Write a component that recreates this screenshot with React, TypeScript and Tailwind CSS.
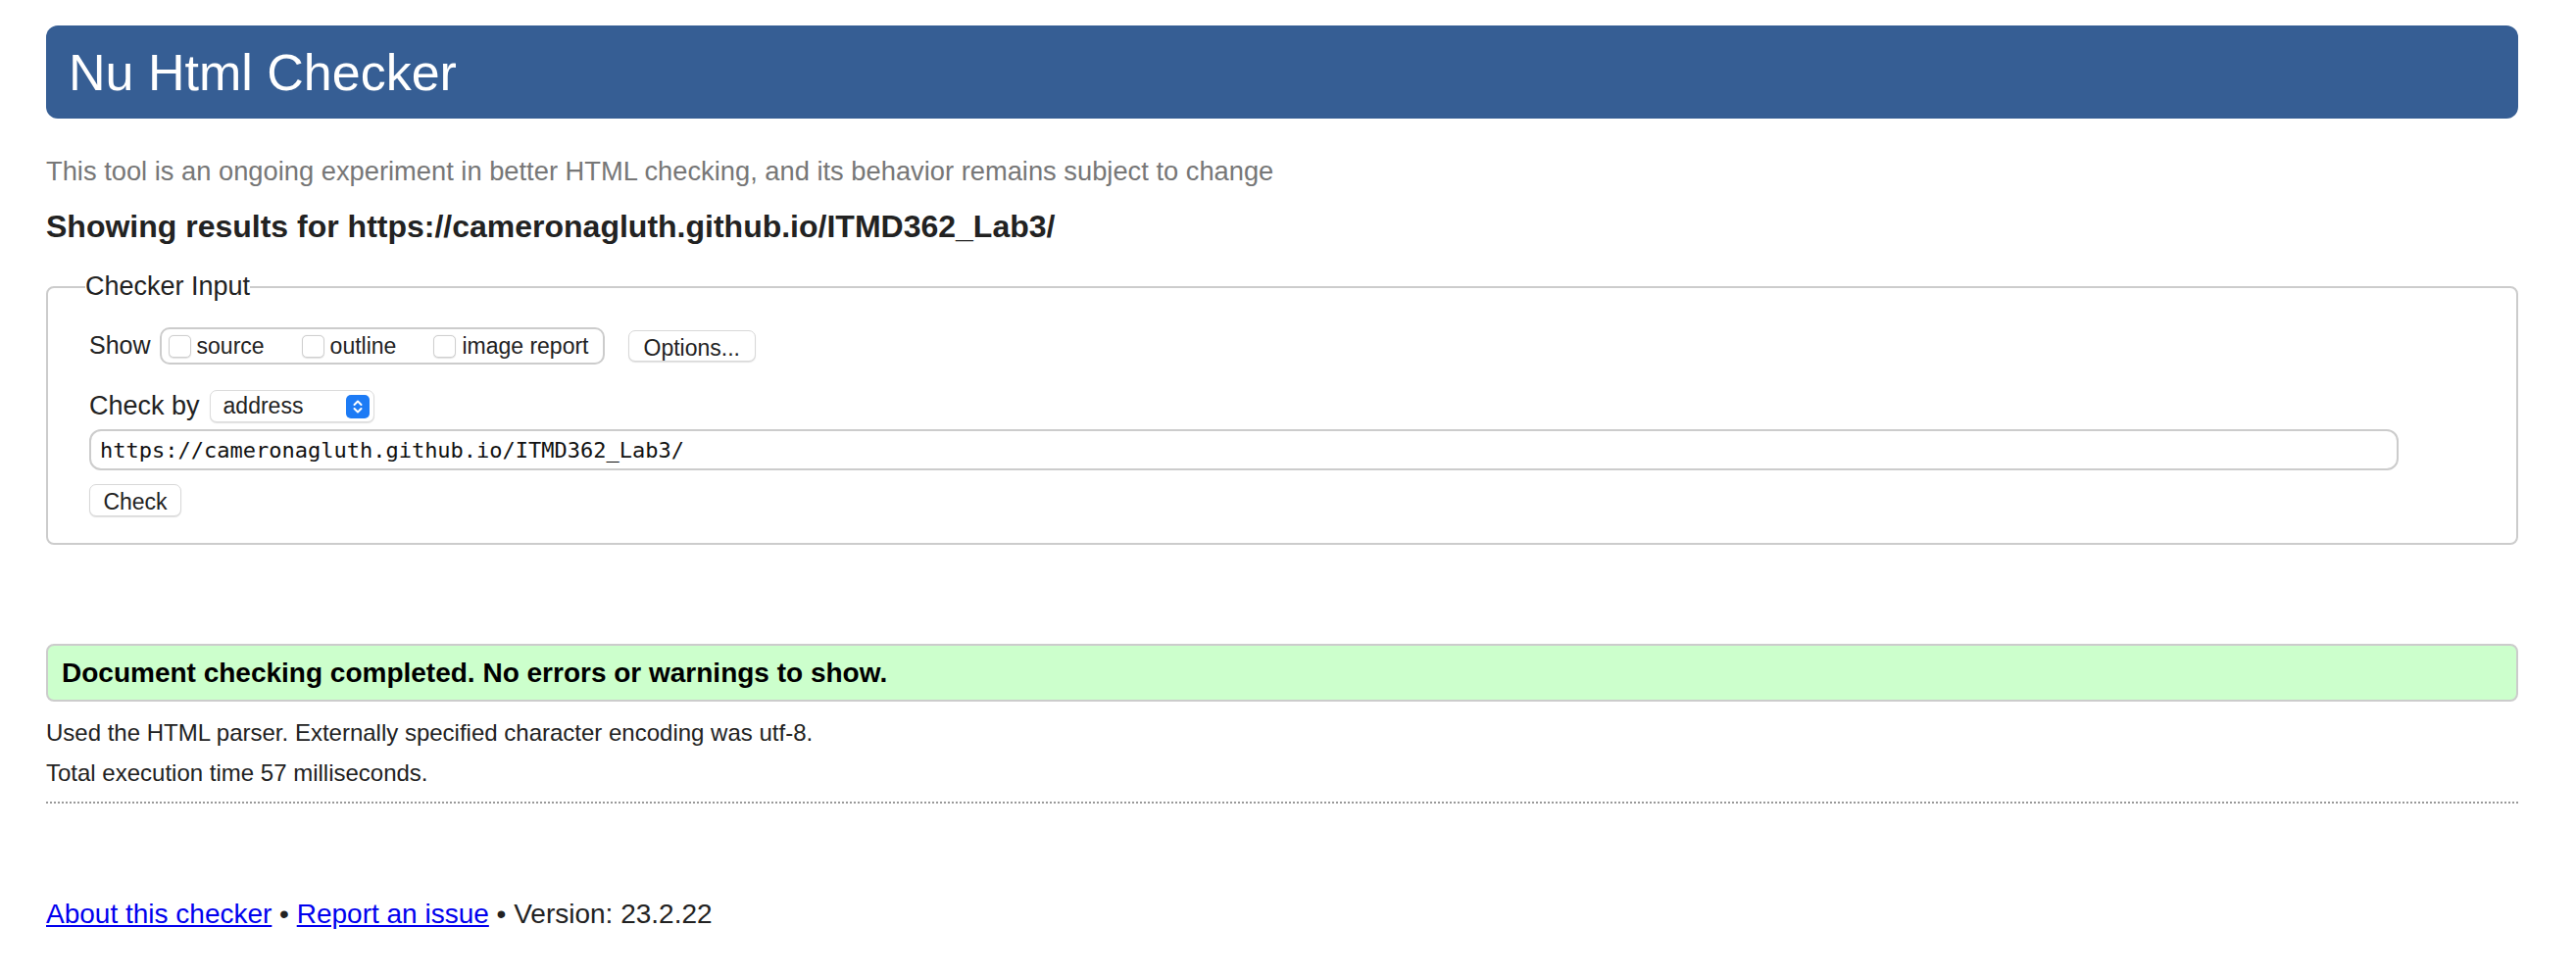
import React from 'react';

function Checkbox({ label, first }: { label: string; first?: boolean }) {
  return (
    <label className={`flex items-center ${first ? '' : 'ml-[38px]'}`}>
      <span className="w-[23px] h-[23px] rounded-[5px] bg-white border border-[#cfcfcf] shadow-[0_0.5px_1px_rgba(0,0,0,0.12)]" />
      <span className="ml-[6px] text-[23px] text-[#222]">{label}</span>
    </label>
  );
}

function SelectChevrons() {
  return (
    <span className="w-[24px] h-[24px] rounded-[5px] bg-[#1d7bf5] flex items-center justify-center">
      <svg width="24" height="24" viewBox="0 0 24 24" fill="none">
        <path d="M8.5 10 L12 6.5 L15.5 10" stroke="white" strokeWidth="2" strokeLinecap="round" strokeLinejoin="round" />
        <path d="M8.5 14 L12 17.5 L15.5 14" stroke="white" strokeWidth="2" strokeLinecap="round" strokeLinejoin="round" />
      </svg>
    </span>
  );
}

export default function App() {
  const url = 'https://cameronagluth.github.io/ITMD362_Lab3/';

  return (
    <div className="min-h-[996px] bg-white font-['Liberation_Sans',Arial,sans-serif] text-[#222]">
      <div className="ml-[47px] w-[2522px] pt-[26px]">
        {/* header */}
        <div className="h-[95px] rounded-[12px] bg-[#365e94] flex items-center pl-[23px]">
          <h1 className="text-[52px] leading-none text-white font-normal">Nu Html Checker</h1>
        </div>

        <p className="mt-[38px] text-[27.3px] leading-[31px] text-[#777]">
          This tool is an ongoing experiment in better HTML checking, and its behavior remains subject to change
        </p>

        <h2 className="mt-[23px] text-[32px] leading-[37px] font-bold text-[#222]">
          Showing results for {url}
        </h2>

        {/* checker input */}
        <fieldset className="mt-[27px] border-2 border-[#ccc] rounded-[8px] px-[42px] pt-[26px] pb-[27px]">
          <legend className="-ml-1 px-0 text-[27px] leading-[31px] text-[#222]">Checker Input</legend>

          <div className="flex items-center h-[38px]">
            <span className="text-[25px]">Show</span>
            <div className="ml-[9px] h-[38px] border-2 border-[#ccc] rounded-[10px] flex items-center pl-[7px] pr-[14px]">
              <Checkbox label="source" first />
              <Checkbox label="outline" />
              <Checkbox label="image report" />
            </div>
            <button className="ml-[24px] h-[32px] px-[15px] rounded-[7px] bg-white border border-[#d8d8d8] shadow-[0_1px_1px_rgba(0,0,0,0.12)] text-[23px] text-[#222]">
              Options...
            </button>
          </div>

          <div className="mt-[26px] flex items-center h-[33px]">
            <span className="text-[27px]">Check by</span>
            <div className="ml-[10px] w-[168px] h-[33px] rounded-[7px] bg-white border border-[#dcdcdc] shadow-[0_1px_1px_rgba(0,0,0,0.12)] flex items-center justify-between pl-[13px] pr-[4px]">
              <span className="text-[23px] text-[#222]">address</span>
              <SelectChevrons />
            </div>
          </div>

          <div className="mt-[7px] w-[2356px] h-[42px] border-2 border-[#ccc] rounded-[12px] flex items-center pl-[9px] font-['DejaVu_Sans_Mono',monospace] text-[22px] text-[#111]">
            {url}
          </div>

          <div className="mt-[14px]">
            <button className="h-[33px] w-[94px] rounded-[7px] bg-white border border-[#d8d8d8] shadow-[0_1px_1px_rgba(0,0,0,0.12)] text-[23px] text-[#222]">
              Check
            </button>
          </div>
        </fieldset>

        {/* result */}
        <div className="mt-[101px] h-[59px] border-2 border-[#ccc] rounded-[8px] bg-[#ccffcc] flex items-center pl-[14px]">
          <p className="text-[28px] font-bold text-black">Document checking completed. No errors or warnings to show.</p>
        </div>

        <p className="mt-[11px] text-[24px] leading-[41px]">Used the HTML parser. Externally specified character encoding was utf-8.</p>
        <p className="text-[24px] leading-[41px]">Total execution time 57 milliseconds.</p>

        <div className="mt-[9px] border-t-2 border-dotted border-[#999]" />

        <p className="mt-[97px] text-[28px] leading-[32px]">
          <a href="#" className="text-[#0000ee] underline">About this checker</a>
          {' • '}
          <a href="#" className="text-[#0000ee] underline">Report an issue</a>
          {' • Version: 23.2.22'}
        </p>
      </div>
    </div>
  );
}
